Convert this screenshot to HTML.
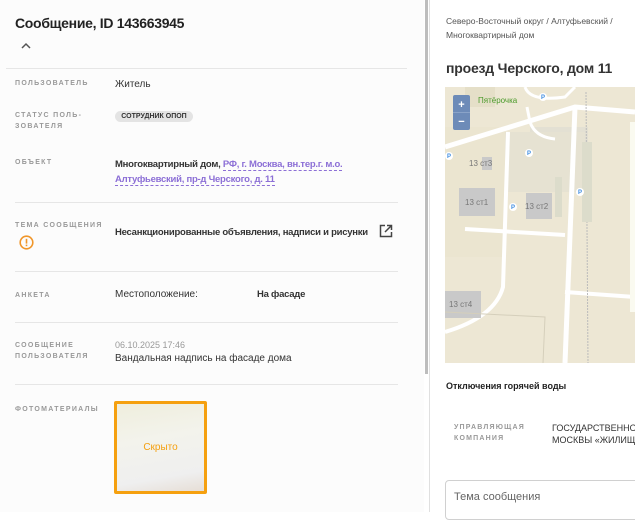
<!DOCTYPE html>
<html><head><meta charset="utf-8"><style>
*{margin:0;padding:0;box-sizing:border-box}
body{width:635px;height:512px;overflow:hidden;font-family:"Liberation Sans",Arial,sans-serif;background:#fff;position:relative;color:#333}
.left{position:absolute;left:0;top:0;width:424px;height:512px;background:#fcfcfc}
.a{position:absolute}
.lab{position:absolute;left:15px;font-size:7px;letter-spacing:1.3px;color:#999;font-weight:bold;line-height:11px}
.val{position:absolute;left:115px;font-size:10px;color:#333;line-height:15px;white-space:nowrap}
.b{font-weight:bold;font-size:9.5px;letter-spacing:-0.25px}
.hr{position:absolute;left:15px;width:383px;height:1px;background:#e6e6e6}
.lnk{color:#8c6fd6;border-bottom:1px dashed #8c6fd6}
</style></head><body>
<div class="left">
<div class="a" style="left:15px;top:15px;font-size:14px;font-weight:bold;color:#222;letter-spacing:-0.3px">Сообщение, ID 143663945</div>
<svg class="a" style="left:21px;top:42px" width="10" height="8"><path d="M1 6 L5 2 L9 6" stroke="#555" stroke-width="1.5" fill="none"/></svg>
<div class="hr" style="left:6px;width:401px;top:68px"></div>
<div class="lab" style="top:78px">ПОЛЬЗОВАТЕЛЬ</div>
<div class="val" style="top:77px">Житель</div>
<div class="lab" style="top:110px">СТАТУС ПОЛЬ-<br>ЗОВАТЕЛЯ</div>
<div class="a" style="left:115px;top:111px;width:78px;height:11px;border-radius:6px;background:#e4e4e4;font-size:7px;font-weight:bold;color:#333;text-align:center;line-height:11px">СОТРУДНИК ОПОП</div>
<div class="lab" style="top:157px">ОБЪЕКТ</div>
<div class="val b" style="top:157px;line-height:15px">Многоквартирный дом, <span class="lnk">РФ, г. Москва, вн.тер.г. м.о.</span><br><span class="lnk">Алтуфьевский, пр-д Черского, д. 11</span></div>
<div class="hr" style="top:202px"></div>
<div class="lab" style="top:220px">ТЕМА СООБЩЕНИЯ</div>
<svg class="a" style="left:19px;top:235px" width="15" height="15"><circle cx="7.5" cy="7.5" r="6.3" stroke="#f0962a" stroke-width="1.6" fill="none"/><rect x="6.7" y="3.8" width="1.6" height="4.8" fill="#f0962a"/><rect x="6.7" y="9.6" width="1.6" height="1.6" fill="#f0962a"/></svg>
<div class="val b" style="top:225px">Несанкционированные объявления, надписи и рисунки</div>
<svg class="a" style="left:379px;top:224px" width="14" height="14"><path d="M6 1.5H1.5V12.5H12.5V8" stroke="#444" stroke-width="1.5" fill="none"/><path d="M8 1.5H12.5V6M12.5 1.5L6 8" stroke="#444" stroke-width="1.5" fill="none"/></svg>
<div class="hr" style="top:271px"></div>
<div class="lab" style="top:290px">АНКЕТА</div>
<div class="val" style="top:287px">Местоположение:</div>
<div class="val b" style="left:257px;top:287px">На фасаде</div>
<div class="hr" style="top:322px"></div>
<div class="lab" style="top:340px">СООБЩЕНИЕ<br>ПОЛЬЗОВАТЕЛЯ</div>
<div class="val" style="top:338px;font-size:9px;color:#999">06.10.2025 17:46</div>
<div class="val" style="top:351px">Вандальная надпись на фасаде дома</div>
<div class="hr" style="top:384px"></div>
<div class="lab" style="top:404px">ФОТОМАТЕРИАЛЫ</div>
<div class="a" style="left:114px;top:401px;width:93px;height:93px;border:3px solid #f5a00f;border-radius:2px;background:linear-gradient(170deg,#efeedd 0%,#f3f3ec 40%,#efefef 80%,#e6ded6 100%);color:#f5a00f;font-size:10px;text-align:center;line-height:87px">Скрыто</div>
</div>
<div class="a" style="left:425px;top:0;width:3px;height:374px;background:#bdbdbd"></div>
<div class="a" style="left:429px;top:0;width:1px;height:512px;background:#e0e0e0"></div>

<div class="a" style="left:446px;top:14px;font-size:8.5px;color:#555;line-height:14px">Северо-Восточный округ / Алтуфьевский /<br>Многоквартирный дом</div>
<div class="a" style="left:446px;top:60px;font-size:14px;font-weight:bold;color:#333;letter-spacing:-0.2px">проезд Черского, дом 11</div>
<svg class="a" style="left:445px;top:87px" width="190" height="276">
<rect width="190" height="276" fill="#ede7d4"/>
<rect x="20" y="0" width="30" height="20" fill="#e5dfc8"/>
<rect x="85" y="40" width="58" height="45" fill="#e3e0d3"/>
<rect x="0" y="40" width="60" height="130" fill="#ebe5d0"/>
<rect x="60" y="45" width="80" height="60" fill="#e6e2d2"/>
<path d="M0 60 L130 20 L190 25" stroke="#fff" stroke-width="5" fill="none"/>
<path d="M63 45 L58 200 Q50 230 0 245" stroke="#fff" stroke-width="4" fill="none"/>
<path d="M130 20 L120 276" stroke="#fff" stroke-width="5" fill="none"/>
<path d="M20 142 L120 148" stroke="#fff" stroke-width="4" fill="none"/>
<path d="M120 205 L190 210" stroke="#fff" stroke-width="4" fill="none"/>
<path d="M80 0 Q85 15 120 10 L130 0" stroke="#fff" stroke-width="3" fill="none"/>
<path d="M82 20 L85 35 Q90 50 110 52" stroke="#fff" stroke-width="3" fill="none"/>
<path d="M141 5 L143 276" stroke="#bbb" stroke-width="1" stroke-dasharray="2,1" fill="none"/>
<rect x="137" y="55" width="10" height="80" fill="#dcdccb"/>
<rect x="110" y="90" width="7" height="40" fill="#dcdccb"/>
<rect x="185" y="35" width="5" height="190" fill="#fafaf0"/>
<rect x="37" y="70" width="10" height="13" fill="#c9c9c9"/>
<rect x="14" y="101" width="36" height="28" fill="#c9c9c9"/>
<rect x="81" y="106" width="26" height="26" fill="#c9c9c9"/>
<rect x="0" y="204" width="36" height="27" fill="#c9c9c9"/>
<path d="M0 225 L100 230 L98 276" stroke="#d5cfbb" stroke-width="1" fill="none"/>
<text x="24" y="79" font-size="8" fill="#777" font-family="Liberation Sans">13 ст3</text>
<text x="20" y="118" font-size="8" fill="#777" font-family="Liberation Sans">13 ст1</text>
<text x="80" y="122" font-size="8" fill="#777" font-family="Liberation Sans">13 ст2</text>
<text x="4" y="220" font-size="8" fill="#777" font-family="Liberation Sans">13 ст4</text>
<text x="33" y="16" font-size="8" fill="#4a9a2a" font-family="Liberation Sans">Пятёрочка</text>
<g fill="#fff"><circle cx="4" cy="69" r="4"/><circle cx="84" cy="66" r="4"/><circle cx="68" cy="120" r="4"/><circle cx="135" cy="105" r="4"/><circle cx="98" cy="10" r="4"/></g>
<g font-size="6" fill="#3c8be0" font-family="Liberation Sans" font-weight="bold"><text x="2" y="71">P</text><text x="82" y="68">P</text><text x="66" y="122">P</text><text x="133" y="107">P</text><text x="96" y="12">P</text></g>
<rect x="8" y="8" width="17" height="35" rx="2" fill="#6d8bb8"/>
<rect x="8" y="25" width="17" height="1" fill="#8aa3c8"/>
<text x="16.5" y="21" font-size="11" fill="#fff" text-anchor="middle" font-weight="bold" font-family="Liberation Sans">+</text>
<text x="16.5" y="38" font-size="11" fill="#fff" text-anchor="middle" font-weight="bold" font-family="Liberation Sans">−</text>
</svg>
<div class="a" style="left:446px;top:381px;font-size:9px;font-weight:bold;color:#222">Отключения горячей воды</div>
<div class="a" style="left:454px;top:422px;font-size:7px;letter-spacing:1.2px;color:#999;font-weight:bold;line-height:11px">УПРАВЛЯЮЩАЯ<br>КОМПАНИЯ</div>
<div class="a" style="left:552px;top:422px;font-size:9px;color:#333;line-height:12px;white-space:nowrap">ГОСУДАРСТВЕННОЕ<br>МОСКВЫ «ЖИЛИЩНИК</div>
<div class="a" style="left:445px;top:480px;width:200px;height:40px;border:1px solid #d0d0d0;border-radius:4px"></div>
<div class="a" style="left:454px;top:491px;font-size:11px;color:#666">Тема сообщения</div>
</body></html>
